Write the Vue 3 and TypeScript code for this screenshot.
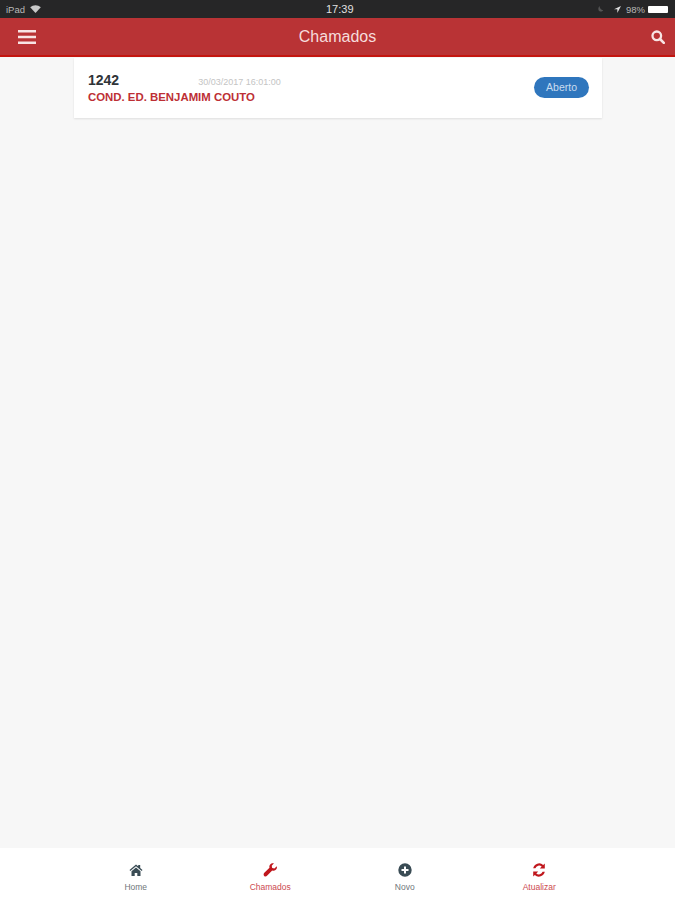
<template>
  <div class="screen">
    <div class="status-bar">
      <div class="status-left">
        <span>iPad</span>
        <svg class="wifi" viewBox="0 0 12 9"><path d="M6 9 0 2.600C3.400-.6 8.600-.6 12 2.600z" /></svg>
      </div>
      <span class="clock">17:39</span>
      <div class="status-right">
        <svg class="moon" viewBox="0 0 8 8"><path d="M2 0c0 3 2 5 5 5.500C5.500 8 1 8 .5 4.500.3 2.500 1 1 2 0z" /></svg>
        <svg class="arrow" viewBox="0 0 8 8"><path d="M8 0 0 3.600h3.800V8z" /></svg>
        <span>98%</span>
        <div class="battery"><div class="battery-fill"></div></div>
      </div>
    </div>

    <header class="topbar">
      <button class="icon-btn menu">
        <svg width="18" height="14" viewBox="0 0 18 14"><path d="M0 0h18v2.400H0zM0 5.800h18v2.400H0zM0 11.600h18V14H0z" /></svg>
      </button>
      <h1>Chamados</h1>
      <button class="icon-btn end">
        <svg width="14" height="14" viewBox="0 0 14 14">
          <circle cx="5.800" cy="5.800" r="4.300" fill="none" stroke="currentColor" stroke-width="2.300" />
          <path d="M9 9l3.800 3.800" stroke="currentColor" stroke-width="2.600" stroke-linecap="round" />
        </svg>
      </button>
    </header>

    <main class="content">
      <div v-for="item in tickets" :key="item.id" class="ticket">
        <div class="ticket-info">
          <div class="ticket-top">
            <span class="ticket-id">{{ item.id }}</span>
            <span class="ticket-date">{{ item.date }}</span>
          </div>
          <div class="ticket-name">{{ item.name }}</div>
        </div>
        <span class="badge">{{ item.status }}</span>
      </div>
    </main>

    <footer class="tabs">
      <div v-for="tab in tabs" :key="tab.label" class="tab" :class="{ red: tab.red }">
        <svg width="16" height="16" viewBox="0 0 16 16" v-html="tab.icon"></svg>
        <span>{{ tab.label }}</span>
      </div>
    </footer>
  </div>
</template>

<script setup lang="ts">
interface Ticket {
  id: number;
  date: string;
  name: string;
  status: string;
}

interface Tab {
  label: string;
  icon: string;
  red: boolean;
}

const tickets: Ticket[] = [
  { id: 1242, date: '30/03/2017 16:01:00', name: 'COND. ED. BENJAMIM COUTO', status: 'Aberto' },
];

const tabs: Tab[] = [
  {
    label: 'Home',
    red: false,
    icon: '<path d="M8 2.500 1.500 8l.8 1L8 4.300 13.700 9l.8-1-2.300-2V3h-2v1.300z"/><path d="M3.500 9.300 8 5.500l4.500 3.800V14H9.300v-3H6.700v3H3.500z"/>',
  },
  {
    label: 'Chamados',
    red: true,
    icon: '<path d="M14.800 4.200c.4 1.600-.1 3-1.300 3.800-1 .7-2.200.8-3.300.4L5 13.800c-.8.800-2 .9-2.800.1s-.7-2-.1-2.800l5.400-5.300C7.100 4.700 7.300 3.400 8.200 2.400 9.100 1.300 10.600.9 12 1.300L9.700 3.700l.5 2.200 2.200.6z"/>',
  },
  {
    label: 'Novo',
    red: false,
    icon: '<path fill-rule="evenodd" d="M8 1.300a6.700 6.700 0 1 1 0 13.400A6.700 6.700 0 0 1 8 1.300zM7 4.500v2.500H4.500v2H7v2.500h2V9h2.500V7H9V4.500z"/>',
  },
  {
    label: 'Atualizar',
    red: true,
    icon: '<path d="M13.800 1.500v5h-5l1.900-1.900A3.900 3.900 0 0 0 4.400 6.200H2.200a6 6 0 0 1 10-3.200z"/><path d="M2.200 14.500v-5h5l-1.900 1.900a3.900 3.900 0 0 0 6.300-1.600h2.200a6 6 0 0 1-10 3.200z"/>',
  },
];
</script>

<style>
html,
body {
  margin: 0;
  background: #f7f7f7;
}
</style>

<style scoped>
.screen {
  display: flex;
  flex-direction: column;
  height: 900px;
  background: #f7f7f7;
  font-family: "Liberation Sans", Arial, sans-serif;
  overflow: hidden;
}

.status-bar {
  display: grid;
  grid-template-columns: 320px auto 1fr;
  align-items: center;
  height: 18px;
  padding: 0 6px;
  background: #262627;
  color: #b8b8b8;
  font-size: 9.500px;
}

.status-left {
  display: flex;
  align-items: center;
  gap: 5px;
}

.wifi {
  width: 11px;
  height: 8px;
  fill: #c8c8c8;
}

.clock {
  color: #e0e0e0;
  font-size: 11px;
}

.status-right {
  display: flex;
  align-items: center;
  justify-content: flex-end;
  gap: 3px;
}

.moon {
  width: 6px;
  height: 6px;
  margin-right: 7px;
  fill: #555;
}

.arrow {
  width: 7px;
  height: 7px;
  margin-right: 2px;
  fill: #e0e0e0;
}

.battery {
  width: 20px;
  height: 7px;
  padding-right: 1px;
}

.battery-fill {
  height: 100%;
  background: #fff;
  border-radius: 1px;
}

.topbar {
  display: grid;
  grid-template-columns: 1fr auto 1fr;
  align-items: center;
  box-sizing: border-box;
  height: 39px;
  padding: 0 10px;
  background: #b93335;
  border-bottom: 2px solid #c4150f;
  color: #f6dcdc;
}

.topbar h1 {
  margin: 0;
  font-size: 16px;
  font-weight: 400;
}

.icon-btn {
  display: flex;
  padding: 0;
  background: none;
  border: 0;
  color: #f8e4e4;
}

.icon-btn.menu {
  margin-left: 8px;
}

.icon-btn.end {
  justify-content: flex-end;
}

.icon-btn svg {
  fill: currentColor;
}

.content {
  flex: 1;
  padding: 1px 73px 0 74px;
}

.ticket {
  display: flex;
  align-items: center;
  justify-content: space-between;
  box-sizing: border-box;
  height: 60px;
  padding: 0 13px 2px 14px;
  background: #fff;
  box-shadow: 0 1px 2px rgba(0, 0, 0, 0.1);
}

.ticket-top {
  display: flex;
  align-items: baseline;
  gap: 79px;
  margin-bottom: 3px;
}

.ticket-id {
  color: #2f3438;
  font-size: 14px;
  font-weight: 700;
}

.ticket-date {
  color: #c4c4c4;
  font-size: 9px;
}

.ticket-name {
  color: #bd2f35;
  font-size: 11.400px;
  font-weight: 700;
}

.badge {
  padding: 4px 12px;
  border-radius: 11px;
  background: #2f76bd;
  color: #c9dcf0;
  font-size: 10.500px;
  line-height: 13px;
}

.tabs {
  display: flex;
  justify-content: center;
  height: 52px;
  background: #fff;
}

.tab {
  display: flex;
  flex-direction: column;
  align-items: center;
  gap: 4px;
  width: 134.500px;
  padding-top: 14px;
  color: #3a4c55;
  font-size: 8.500px;
}

.tab svg {
  fill: currentColor;
}

.tab span {
  color: #70767a;
}

.tab.red {
  color: #c0171d;
}

.tab.red span {
  color: #cc4a50;
}
</style>
